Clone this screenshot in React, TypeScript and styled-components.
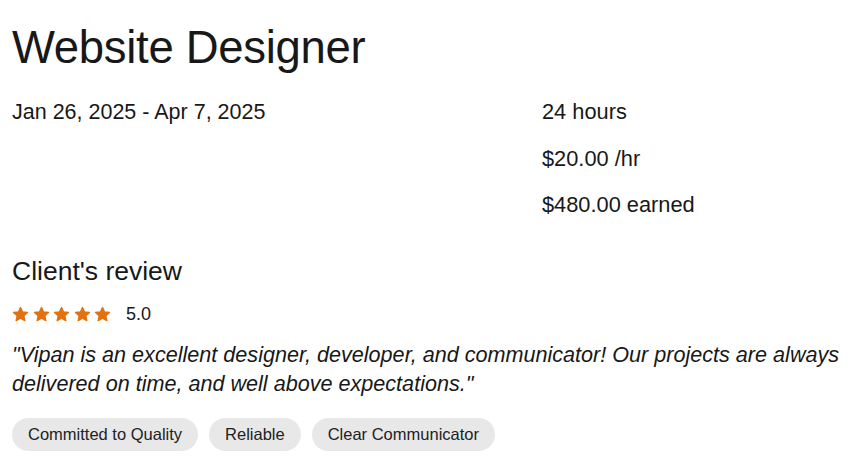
import styled, { createGlobalStyle } from "styled-components";

const GlobalStyle = createGlobalStyle`
  body {
    margin: 0;
    background: #ffffff;
    color: #181818;
    font-family: "Liberation Sans", Arial, sans-serif;
  }
`;

const tags = ["Committed to Quality", "Reliable", "Clear Communicator"];

function Star() {
  return (
    <svg width="17" height="17" viewBox="0 0 24 24">
      <path
        d="M12 2.2l2.9 6.3 6.9.7-5.2 4.6 1.5 6.8L12 17.1l-6.1 3.5 1.5-6.8-5.2-4.6 6.9-.7z"
        fill="#e2710f"
        stroke="#e2710f"
        strokeWidth="2"
        strokeLinejoin="round"
      />
    </svg>
  );
}

export default function App() {
  return (
    <>
      <GlobalStyle />
      <Pagina>
        <Titulo>Website Designer</Titulo>
        <Detalhes>
          <Periodo>Jan 26, 2025 - Apr 7, 2025</Periodo>
          <Resumo>
            <Linha>24 hours</Linha>
            <Linha>$20.00 /hr</Linha>
            <Linha>$480.00 earned</Linha>
          </Resumo>
        </Detalhes>
        <Subtitulo>Client's review</Subtitulo>
        <Avaliacao>
          <Estrelas>
            {[0, 1, 2, 3, 4].map((i) => (
              <Star key={i} />
            ))}
          </Estrelas>
          <Nota>5.0</Nota>
        </Avaliacao>
        <Comentario>
          "Vipan is an excellent designer, developer, and communicator! Our projects are always
          delivered on time, and well above expectations."
        </Comentario>
        <Etiquetas>
          {tags.map((t) => (
            <Etiqueta key={t}>{t}</Etiqueta>
          ))}
        </Etiquetas>
      </Pagina>
    </>
  );
}

const Pagina = styled.div`
  padding: 20px 12px 0 12px;
  width: 861px;
  box-sizing: border-box;
`;

const Titulo = styled.h1`
  margin: 0;
  font-size: 45.5px;
  font-weight: 400;
  line-height: 56px;
  letter-spacing: -0.3px;
`;

const Detalhes = styled.div`
  display: grid;
  grid-template-columns: 530px 1fr;
  margin-top: 24px;
`;

const Periodo = styled.div`
  font-size: 21.5px;
  line-height: 24px;
`;

const Resumo = styled.div`
  display: flex;
  flex-direction: column;
  gap: 22.5px;
`;

const Linha = styled.div`
  font-size: 21.8px;
  line-height: 24px;
`;

const Subtitulo = styled.h2`
  margin: 39px 0 0 0;
  font-size: 26.5px;
  font-weight: 400;
  line-height: 30px;
`;

const Avaliacao = styled.div`
  display: flex;
  align-items: center;
  gap: 15px;
  margin-top: 18px;
`;

const Estrelas = styled.div`
  display: flex;
  gap: 3.5px;
`;

const Nota = styled.span`
  font-size: 18px;
`;

const Comentario = styled.p`
  margin: 15px 0 0 0;
  font-size: 21.6px;
  line-height: 29px;
  font-style: italic;
`;

const Etiquetas = styled.div`
  display: flex;
  gap: 11px;
  margin-top: 20px;
`;

const Etiqueta = styled.span`
  background: #e8e8e8;
  border-radius: 17px;
  padding: 0 16px;
  height: 33px;
  display: inline-flex;
  align-items: center;
  font-size: 16.5px;
  color: #222;
`;
